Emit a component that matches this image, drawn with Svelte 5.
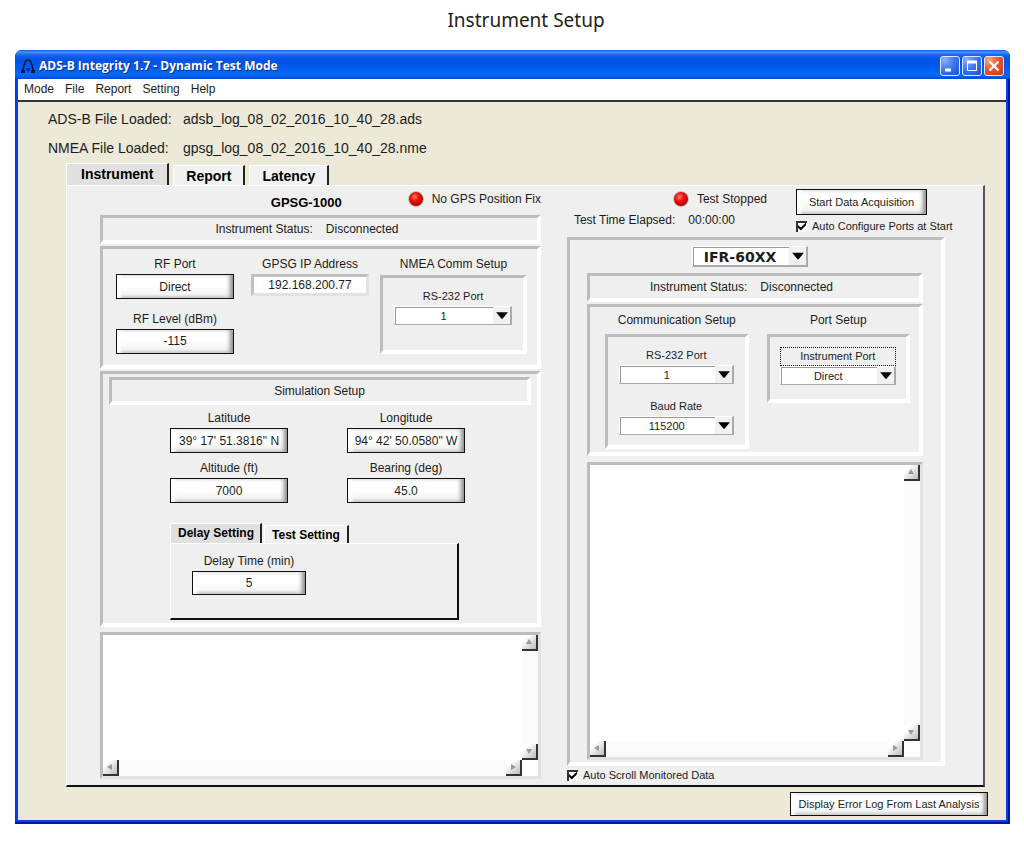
<script lang="ts">
	const MENU = ['Mode', 'File', 'Report', 'Setting', 'Help'];
	const TABS = ['Instrument', 'Report', 'Latency'];
	const SUB_TABS = ['Delay Setting', 'Test Setting'];

	const files = [
		{ label: 'ADS-B File Loaded:', name: 'adsb_log_08_02_2016_10_40_28.ads' },
		{ label: 'NMEA File Loaded:',  name: 'gpsg_log_08_02_2016_10_40_28.nme' },
	];

	const simulation = [
		{ id: 'lat', label: 'Latitude',      value: '39° 17\' 51.3816" N' },
		{ id: 'lon', label: 'Longitude',     value: '94° 42\' 50.0580" W' },
		{ id: 'alt', label: 'Altitude (ft)', value: '7000' },
		{ id: 'brg', label: 'Bearing (deg)', value: '45.0' },
	];

	let tab        = $state('Instrument');
	let subTab     = $state('Delay Setting');
	let ip         = $state('192.168.200.77');
	let autoPorts  = $state(true);
	let autoScroll = $state(true);
</script>

{#snippet combo(id: string, options: string[])}
	<span class="combo">
		<select {id}>
			{#each options as o}<option>{o}</option>{/each}
		</select>
		<svg class="combo-arrow" viewBox="0 0 16 16" aria-hidden="true">
			<path d="M3 5H14L9 11H8Z" />
		</svg>
	</span>
{/snippet}

{#snippet field(id: string, label: string, value: string)}
	<div class="field">
		<label for={id}>{label}</label>
		<button class="btn" {id}>{value}</button>
	</div>
{/snippet}

{#snippet status()}
	<div class="sunken status">
		<span>Instrument Status:</span>
		<span>Disconnected</span>
	</div>
{/snippet}

{#snippet arrow(name: string, d: string)}
	<button class="sb {name}" aria-label="Scroll {name}">
		<svg viewBox="0 0 14 14" aria-hidden="true"><path {d} /></svg>
	</button>
{/snippet}

{#snippet monitor(label: string)}
	<div class="monitor">
		<textarea readonly aria-label={label}></textarea>
		<div class="track-v">
			{@render arrow('up', 'M4 9L7 4L10 9Z')}
			{@render arrow('down', 'M4 5H10L7 10Z')}
		</div>
		<div class="track-h">
			{@render arrow('left', 'M9 4V10L4 7Z')}
			{@render arrow('right', 'M5 4L10 7L5 10Z')}
		</div>
	</div>
{/snippet}

<main>
	<h1>Instrument Setup</h1>

	<div class="window">
		<!-- Title bar -->
		<header class="titlebar">
			<svg class="app-icon" viewBox="0 0 14 16" aria-hidden="true">
				<path d="M2 14V11L4 4L6 2H8L10 4L12 11V14" fill="none" stroke="#0a1838" stroke-width="1.5" />
				<path d="M0 12H4V15H0ZM10 12H14V15H10Z" fill="#0a1838" />
				<path d="M4 10H10L7 14Z" fill="#0420c0" />
			</svg>
			<h2>ADS-B Integrity 1.7 - Dynamic Test Mode</h2>
			<div class="win-btns">
				<button class="wb" aria-label="Minimize">
					<svg viewBox="0 0 18 18"><path d="M4 13H10" stroke="#fff" stroke-width="3" /></svg>
				</button>
				<button class="wb" aria-label="Maximize">
					<svg viewBox="0 0 18 18"><path d="M4 5H14" stroke="#fff" stroke-width="3" /><path d="M4.5 4V13.5H13.5V4" fill="none" stroke="#fff" /></svg>
				</button>
				<button class="wb close" aria-label="Close">
					<svg viewBox="0 0 18 18"><path d="M4.5 4.5L13.5 13.5M13.5 4.5L4.5 13.5" stroke="#fff" stroke-width="2.2" /></svg>
				</button>
			</div>
		</header>

		<nav class="menu">
			{#each MENU as m}<button>{m}</button>{/each}
		</nav>

		<div class="client">
			<dl class="files">
				{#each files as f}
					<dt>{f.label}</dt>
					<dd>{f.name}</dd>
				{/each}
			</dl>

			<div class="tabs" role="tablist">
				{#each TABS as t}
					<button role="tab" aria-selected={tab === t} class:on={tab === t} onclick={() => (tab = t)}>{t}</button>
				{/each}
			</div>

			<div class="panel">
				<!-- GPSG-1000 side -->
				<section class="gpsg">
					<div class="gpsg-head">
						<h3>GPSG-1000</h3>
						<span class="led-row"><i class="led"></i>No GPS Position Fix</span>
					</div>

					{@render status()}

					<div class="sunken ports">
						<div class="rf">
							{@render field('rf-port', 'RF Port', 'Direct')}
							{@render field('rf-level', 'RF Level (dBm)', '-115')}
						</div>
						<div class="ip field">
							<label for="ip">GPSG IP Address</label>
							<input id="ip" type="text" bind:value={ip} />
						</div>
						<div class="nmea">
							<h4>NMEA Comm Setup</h4>
							<div class="sunken well">
								<label class="small" for="nmea-port">RS-232 Port</label>
								{@render combo('nmea-port', ['1', '2', '3', '4'])}
							</div>
						</div>
					</div>

					<div class="sunken sim">
						<h4 class="sunken sim-title">Simulation Setup</h4>
						<div class="sim-grid">
							{#each simulation as s}
								{@render field(s.id, s.label, s.value)}
							{/each}
						</div>
						<div class="sub">
							<div class="sub-tabs" role="tablist">
								{#each SUB_TABS as t}
									<button role="tab" aria-selected={subTab === t} class:on={subTab === t} onclick={() => (subTab = t)}>{t}</button>
								{/each}
							</div>
							<div class="sub-panel">
								{@render field('delay', 'Delay Time (min)', '5')}
							</div>
						</div>
					</div>

					{@render monitor('GPSG-1000 data')}
				</section>

				<!-- IFR-60XX side -->
				<section class="ifr">
					<div class="ifr-head">
						<div class="test">
							<span class="led-row"><i class="led"></i>Test Stopped</span>
							<p class="elapsed"><span>Test Time Elapsed:</span><span>00:00:00</span></p>
						</div>
						<div class="acquire">
							<button class="btn">Start Data Acquisition</button>
							<label class="check"><input type="checkbox" bind:checked={autoPorts} />Auto Configure Ports at Start</label>
						</div>
					</div>

					<div class="sunken ifr-box">
						<div class="model">{@render combo('model', ['IFR-60XX'])}</div>

						{@render status()}

						<div class="sunken comm">
							<div>
								<h4>Communication Setup</h4>
								<div class="sunken well">
									<label class="small" for="comm-port">RS-232 Port</label>
									{@render combo('comm-port', ['1', '2', '3', '4'])}
									<label class="small second" for="baud">Baud Rate</label>
									{@render combo('baud', ['115200', '57600', '9600'])}
								</div>
							</div>
							<div>
								<h4>Port Setup</h4>
								<div class="sunken well port-well">
									<label class="small focused" for="inst-port">Instrument Port</label>
									{@render combo('inst-port', ['Direct', 'Antenna'])}
								</div>
							</div>
						</div>

						{@render monitor('Monitored data')}
					</div>

					<label class="check scroll-check"><input type="checkbox" bind:checked={autoScroll} />Auto Scroll Monitored Data</label>
				</section>
			</div>

			<footer>
				<button class="btn">Display Error Log From Last Analysis</button>
			</footer>
		</div>
	</div>
</main>

<style>
	:global(body) {
		background: #fff;
	}
	main, main * {
		box-sizing: border-box;
	}
	main {
		padding: 0 14px 18px 15px;
		font: 12px/16px 'Liberation Sans', Arial, sans-serif;
		color: #1c1c1c;
	}
	h1, h2, h3, h4, p, dl, dd {
		margin: 0;
	}
	button, select, input, textarea {
		font: inherit;
		color: inherit;
		margin: 0;
		padding: 0;
		border: 0;
		border-radius: 0;
	}
	button {
		background: none;
		white-space: nowrap;
	}
	h1 {
		padding: 6px 0 16px 27px;
		font: 400 19px/28px 'Noto Sans', sans-serif;
		text-align: center;
		color: #222;
	}

	/* ── Window frame ─────────────────────────────────────── */
	.window {
		background: #0a3fe0;
		border-radius: 7px 7px 0 0;
		padding: 0 4px 4px 3px;
		box-shadow: inset -2px -2px #0018a0, inset 1px 0 #0831d9;
	}
	.titlebar {
		display: flex;
		align-items: center;
		height: 29px;
		margin: 0 -4px 0 -3px;
		padding: 3px 6px 0 6px;
		border-radius: 7px 7px 0 0;
		background: linear-gradient(#0a5be0, #3f96ff 2px, #1468ee 5px, #0054e3 9px, #0058ea 16px, #0468ff 25px, #0048d0);
	}
	.app-icon {
		width: 14px;
		height: 16px;
	}
	h2 {
		flex: 1;
		margin-left: 4px;
		font: 700 12px/16px 'Open Sans', sans-serif;
		color: #fff;
		text-shadow: 1px 1px #0a2f8c;
	}
	.win-btns {
		display: flex;
		gap: 2px;
	}
	.wb {
		width: 20px;
		height: 20px;
		border: 1px solid #dfe9ff;
		border-radius: 3px;
		background: radial-gradient(circle at 20% 15%, #8ab0ff, #3c73ee 50%, #1c50d8);
	}
	.wb.close {
		background: radial-gradient(circle at 20% 15%, #f4a58c, #e2552c 50%, #c63c12);
	}
	.wb svg {
		display: block;
		width: 18px;
		height: 18px;
	}
	.menu {
		display: flex;
		gap: 11px;
		height: 23px;
		padding: 2px 6px;
		background: #fff;
		border-bottom: 2px solid #333;
	}
	.menu button {
		height: 16px;
	}

	/* ── Client area ──────────────────────────────────────── */
	.client {
		background: #ece9d8;
		padding: 7px 21px 4px 48px;
	}
	.files {
		display: grid;
		grid-template-columns: 135px 1fr;
		row-gap: 9px;
		margin-left: -18px;
		font-size: 14px;
		line-height: 20px;
	}
	.tabs, .sub-tabs {
		display: flex;
		align-items: flex-end;
	}
	.tabs {
		gap: 4px;
		margin-top: 5px;
	}
	.sub-tabs {
		gap: 2px;
	}
	.tabs button, .sub-tabs button {
		color: #000;
		font-weight: 700;
		background: #f1f1f1;
		border-top: 1px solid #fff;
		border-left: 1px solid #fff;
		border-right: 2px solid #222;
	}
	.tabs button {
		height: 20px;
		padding: 0 12px;
		font-size: 14px;
	}
	.tabs button.on {
		height: 22px;
		padding: 0 14px 2px;
		background: #e0e0e0;
	}
	.panel {
		display: grid;
		grid-template-columns: minmax(0, 441fr) minmax(0, 378fr);
		column-gap: 26px;
		padding: 0 38px 4px 33px;
		background: #efefef;
		border: 1px solid #fff;
		border-right: 2px solid #555;
		border-bottom: 2px solid #111;
	}
	footer {
		display: flex;
		justify-content: flex-end;
		margin: 5px -3px 0 0;
	}
	footer .btn {
		width: 198px;
		height: 24px;
		font-size: 11px;
	}

	/* ── Shared controls ──────────────────────────────────── */
	.sunken {
		border: 3px solid #bcbcbc;
		border-right: 4px solid #fff;
		border-bottom: 4px solid #fff;
	}
	h4 {
		font-size: 12px;
		font-weight: 400;
		text-align: center;
	}
	.btn {
		height: 25px;
		border: 1px solid #111;
		background: linear-gradient(#fff 50%, #ececec);
		box-shadow: inset 5px 0 3px -1px #fff, inset -4px 0 4px -1px #8c8c8c, inset 0 -3px 2px -1px #dcdcdc;
	}
	.field {
		display: flex;
		flex-direction: column;
		gap: 2px;
	}
	.field label, .small {
		text-align: center;
	}
	.small {
		font-size: 11px;
	}
	.led-row {
		display: flex;
		align-items: center;
		gap: 8px;
		white-space: nowrap;
	}
	.led {
		width: 16px;
		height: 16px;
		border: 1px solid #b8c8b8;
		border-radius: 50%;
		background: radial-gradient(circle at 40% 35%, #ff7a6a, #f40c0c 35%, #d00000 60%, #6a0000);
	}
	.combo {
		display: grid;
		grid-template-columns: 1fr 17px;
		height: 19px;
		background: #fff;
		border: 1px solid #fff;
		border-right: 2px solid #aaa;
		border-bottom: 2px solid #aaa;
		font-size: 11px;
	}
	.combo select {
		grid-area: 1 / 1 / 2 / 3;
		appearance: none;
		min-width: 0;
		padding-right: 19px;
		background: #fff;
		border-top: 1px solid #999;
		border-left: 1px solid #999;
		text-align-last: center;
	}
	.combo-arrow {
		grid-area: 1 / 2;
		width: 17px;
		height: 100%;
		background: #f1f1f1;
		pointer-events: none;
	}
	.check {
		display: flex;
		align-items: center;
		gap: 5px;
		font-size: 11px;
		line-height: 12px;
		white-space: nowrap;
	}
	.check input {
		appearance: none;
		flex: none;
		width: 11px;
		height: 11px;
		background: #fff;
		border-top: 2px solid #333;
		border-left: 2px solid #333;
	}
	.check input:checked::before {
		content: '';
		display: block;
		width: 8px;
		height: 8px;
		background: #000;
		clip-path: polygon(0 30%, 35% 62%, 100% 0, 100% 34%, 35% 100%, 0 65%);
	}

	/* ── Monitor list with scroll arrows ──────────────────── */
	.monitor {
		display: grid;
		grid-template: 1fr 16px / 1fr 16px;
		background: #fff;
		border: 3px solid #bcbcbc;
		border-right-color: #e2e2e2;
		border-bottom-color: #e2e2e2;
	}
	.monitor textarea {
		display: block;
		width: 100%;
		height: 100%;
		resize: none;
		background: #fff;
	}
	.track-v, .track-h {
		display: flex;
		justify-content: space-between;
		background: #fafafa;
	}
	.track-v {
		flex-direction: column;
	}
	.sb {
		width: 16px;
		height: 16px;
		background: linear-gradient(135deg, #fff 25%, #e0e0e0 60%, #bbb);
		border-right: 2px solid #333;
		border-bottom: 2px solid #333;
	}
	.sb svg {
		display: block;
		width: 14px;
		height: 14px;
		fill: #999;
	}

	/* ── GPSG side ────────────────────────────────────────── */
	.gpsg, .ifr {
		display: flex;
		flex-direction: column;
	}
	.gpsg-head {
		display: flex;
		justify-content: flex-end;
		gap: 66px;
		height: 29px;
		padding-top: 4px;
		white-space: nowrap;
	}
	.gpsg-head .led-row {
		height: 18px;
	}
	h3 {
		font-size: 13px;
		line-height: 26px;
		color: #000;
	}
	.status {
		display: flex;
		justify-content: center;
		gap: 13px;
		padding: 3px 26px 3px 0;
		white-space: nowrap;
	}
	.ports {
		display: flex;
		margin-top: 2px;
		padding: 7px 10px 11px 13px;
	}
	.rf {
		flex: 118 1 0;
		display: grid;
		row-gap: 11px;
	}
	.ip {
		flex: 118 1 0;
		margin: 0 11px 0 17px;
	}
	.ip input {
		width: 100%;
		height: 22px;
		border: 3px solid #c0c0c0;
		border-right-color: #e2e2e2;
		border-bottom-color: #e2e2e2;
		background: #fff;
		text-align: center;
	}
	.nmea {
		flex: 147 1 0;
	}
	.well {
		display: flex;
		flex-direction: column;
		gap: 2px;
		margin-top: 3px;
		padding: 10px 11px 25px;
	}
	.sim {
		margin-top: 2px;
		padding: 3px 6px;
	}
	.sim-title {
		padding: 3px 0 2px;
	}
	.sim-grid {
		display: grid;
		grid-template-columns: 1fr 1fr;
		gap: 7px 59px;
		padding: 5px 66px 0 61px;
	}
	.sub {
		margin: 20px 72px 0 61px;
	}
	.sub-tabs button {
		height: 18px;
		padding: 0 7px;
	}
	.sub-tabs button.on {
		height: 20px;
		padding: 0 6px 2px 7px;
		background: #e0e0e0;
	}
	.sub-panel {
		padding: 9px 151px 23px 21px;
		border: 1px solid #fff;
		border-right: 2px solid #111;
		border-bottom: 2px solid #111;
		white-space: nowrap;
	}
	.sub-panel .btn {
		height: 24px;
	}
	.gpsg .monitor {
		flex: 1;
		min-height: 147px;
		margin: 5px 0 2px;
	}

	/* ── IFR side ─────────────────────────────────────────── */
	.ifr-head {
		display: flex;
		justify-content: flex-end;
		gap: 29px;
		height: 51px;
		padding-top: 3px;
	}
	.test {
		display: flex;
		flex-direction: column;
		align-items: flex-end;
		gap: 5px;
		padding-top: 2px;
	}
	.elapsed {
		display: flex;
		gap: 13px;
		padding-right: 32px;
		white-space: nowrap;
	}
	.acquire {
		display: flex;
		flex-direction: column;
		align-items: flex-start;
		gap: 5px;
		width: 149px;
	}
	.acquire .btn {
		width: 131px;
		height: 26px;
		font-size: 11px;
	}
	.ifr-box {
		display: flex;
		flex-direction: column;
		padding: 6px 18px 2px 17px;
	}
	.model {
		display: flex;
		justify-content: center;
		padding: 0 11px 6px 0;
	}
	.model .combo {
		width: 116px;
		height: 21px;
		font: 700 14px/16px 'DejaVu Sans', sans-serif;
	}
	.comm {
		display: grid;
		grid-template-columns: 1fr 1fr;
		align-items: start;
		column-gap: 18px;
		margin-top: 2px;
		padding: 5px 9px 3px 15px;
	}
	.comm .well {
		margin-top: 6px;
		padding-bottom: 10px;
	}
	.second {
		margin-top: 12px;
	}
	.comm .port-well {
		gap: 0;
		padding: 10px 10px 14px;
	}
	.focused {
		border: 1px dotted #111;
		line-height: 17px;
	}
	.ifr .monitor {
		height: 298px;
		margin-top: 6px;
	}
	.scroll-check {
		margin-top: 3px;
	}
</style>
